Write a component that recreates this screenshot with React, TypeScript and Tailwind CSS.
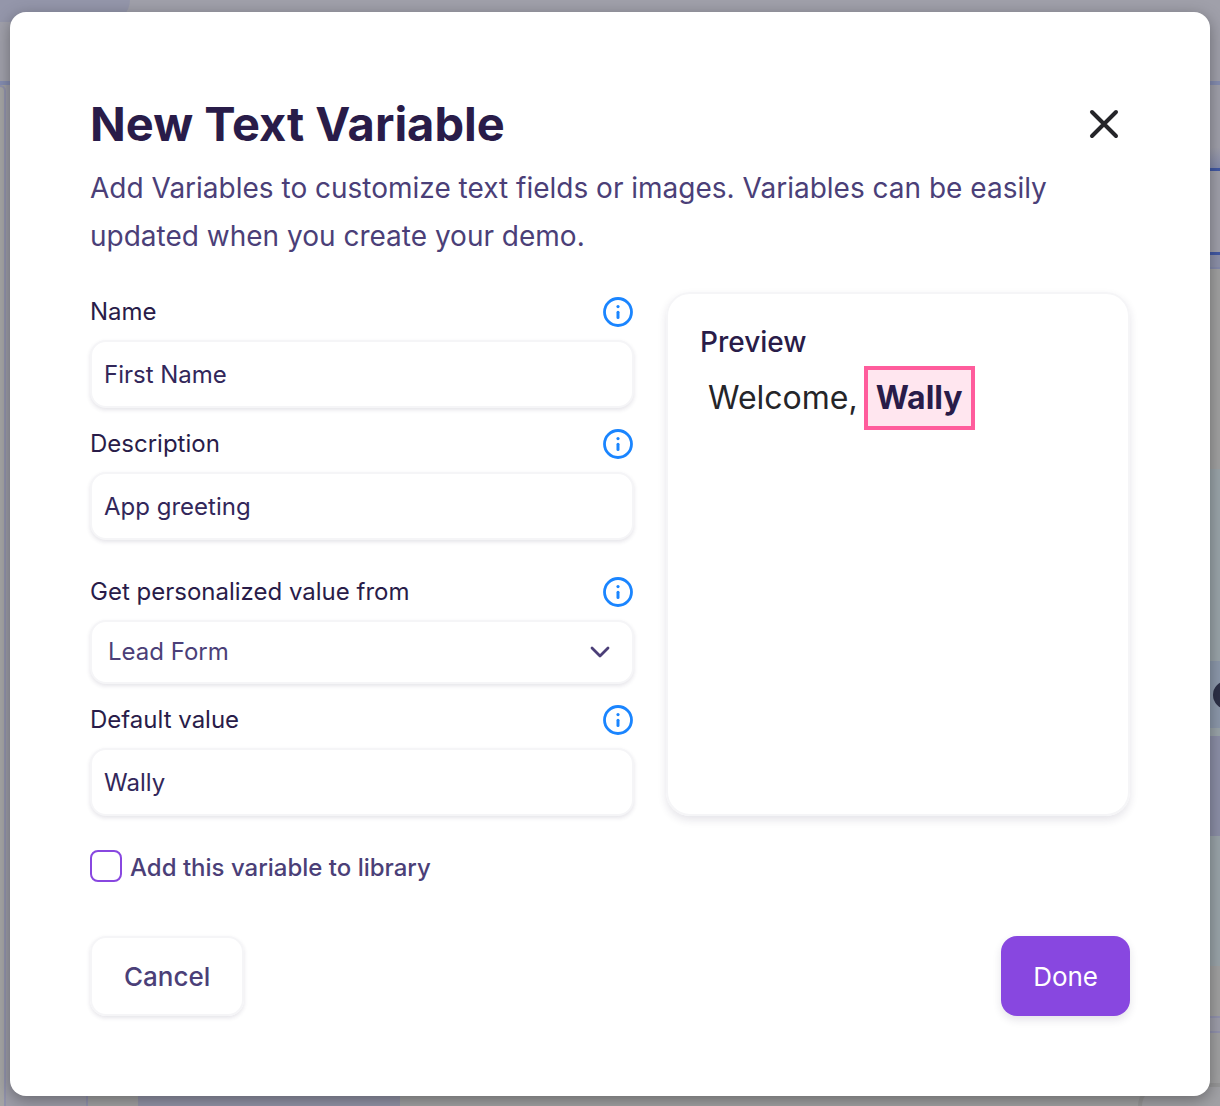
import { useId, useState } from "react";
import type { ReactNode } from "react";

const fieldClass =
  "w-full rounded-2xl border-2 border-[#f5f5f7] bg-white text-2xl shadow-[0_2px_4px_rgba(40,30,75,0.12)] outline-none focus:border-[#8847e0]";

function InfoIcon() {
  return (
    <svg viewBox="0 0 30 30" className="size-[30px]" fill="none" aria-hidden="true">
      <circle cx="15" cy="15" r="13.5" stroke="#1a85ff" strokeWidth="2.8" />
      <circle cx="15" cy="9.6" r="1.6" fill="#1a85ff" />
      <path d="M15 15.2v5.2" stroke="#1a85ff" strokeWidth="3" strokeLinecap="round" />
    </svg>
  );
}

function Field({ label, children }: { label: string; children: (id: string) => ReactNode }) {
  const id = useId();
  return (
    <div className="flex flex-col gap-2">
      <div className="flex h-10 items-center justify-between">
        <label htmlFor={id} className="text-2xl text-[#291c49]">
          {label}
        </label>
        <button type="button" aria-label={`About ${label}`} className="mr-px">
          <InfoIcon />
        </button>
      </div>
      {children(id)}
    </div>
  );
}

function TextField({ label, value, onChange }: { label: string; value: string; onChange: (v: string) => void }) {
  return (
    <Field label={label}>
      {(id) => (
        <input
          id={id}
          type="text"
          value={value}
          onChange={(e) => onChange(e.target.value)}
          className={`${fieldClass} h-[68px] px-3 text-[#32275a]`}
        />
      )}
    </Field>
  );
}

function Backdrop() {
  return (
    <div aria-hidden="true" className="absolute inset-0 flex flex-col overflow-hidden bg-[#a0a0aa]">
      <div className="h-[81px] shrink-0">
        <div className="h-[22px] w-[130px] rounded-br-3xl bg-[#9496aa]" />
      </div>
      <div className="h-1 shrink-0 bg-[#858db1]" />
      <div className="flex flex-1 bg-[#a1a1a2]">
        <div className="w-1.5 rounded-tr-xl border-t-2 border-r-2 border-[#9192ac] bg-[#a5a5a5]" />
        <div className="w-[82px] border-r-2 border-[#9192ac] bg-[#9d9da8]" />
        <div className="w-[50px]" />
        <div className="w-[262px] bg-[#9293a6]" />
        <div className="flex-1" />
        <div className="flex w-[82px] flex-col">
          <div className="h-[83px] bg-linear-to-b from-[#a0a0aa] from-75% to-[#858bab]" />
          <div className="h-[87px] border-y-3 border-[#4259a4] bg-[#a0a0aa]" />
          <div className="h-3.5 border-b-2 border-[#858bac] bg-[#8d91a9]" />
          <div className="h-[200px] bg-[#a1a1a1]" />
          <div className="h-48 bg-[#9aa4a9]" />
          <div className="flex h-[67px] items-center justify-end bg-[#8c98ab]">
            <div className="-mr-[21px] size-7 shrink-0 rounded-full bg-[#2d3047]" />
          </div>
          <div className="h-2 bg-[#9aa4a9]" />
          <div className="h-[100px] bg-[#8c8fa7]" />
          <div className="h-[130px] bg-[#9aa4a9]" />
          <div className="h-[50px] bg-[#a1a1a1]" />
          <div className="h-[17px] border-y-2 border-[#9293ae] bg-[#9e9eaa]" />
          <div className="h-[50px]" />
          <div className="flex-1 rounded-tl-3xl border-t-4 border-l-4 border-[#969697] bg-[#a1a1a5]" />
        </div>
      </div>
    </div>
  );
}

export default function App() {
  const [name, setName] = useState("First Name");
  const [description, setDescription] = useState("App greeting");
  const [source, setSource] = useState("Lead Form");
  const [fallback, setFallback] = useState("Wally");
  const [inLibrary, setInLibrary] = useState(false);

  return (
    <div className="relative min-h-screen px-2.5 pt-3 pb-2.5 font-['Inter',sans-serif]">
      <Backdrop />
      <main
        role="dialog"
        aria-labelledby="dialog-title"
        className="relative rounded-2xl bg-white p-20 shadow-[0_4px_16px_rgba(0,0,0,0.35)]"
      >
        <header>
          <div className="flex items-center justify-between">
            <h1 id="dialog-title" className="text-[47px] leading-16 font-bold text-[#291c49]">
              New Text Variable
            </h1>
            <button type="button" aria-label="Close" className="mr-2.5">
              <svg viewBox="0 0 32 32" className="size-8" fill="none" aria-hidden="true">
                <path d="M4 4l24 24M28 4L4 28" stroke="#252529" strokeWidth="4" strokeLinecap="round" />
              </svg>
            </button>
          </div>
          <p className="mt-2 text-[28px] leading-12 text-[#4b3f78]">
            Add Variables to customize text fields or images. Variables can be easily updated when you create your demo.
          </p>
        </header>

        <form onSubmit={(e) => e.preventDefault()}>
          <div className="mt-8 grid grid-cols-[544fr_464fr] gap-8">
            <div className="flex flex-col gap-8">
              <div className="flex flex-col gap-4">
                <TextField label="Name" value={name} onChange={setName} />
                <TextField label="Description" value={description} onChange={setDescription} />
              </div>
              <div className="flex flex-col gap-4">
                <Field label="Get personalized value from">
                  {(id) => (
                    <div className="relative">
                      <select
                        id={id}
                        value={source}
                        onChange={(e) => setSource(e.target.value)}
                        className={`${fieldClass} block h-16 appearance-none px-4 text-[#4b3f78]`}
                      >
                        <option>Lead Form</option>
                      </select>
                      <svg
                        viewBox="0 0 24 24"
                        className="pointer-events-none absolute inset-y-0 right-[22px] my-auto size-6"
                        fill="none"
                        aria-hidden="true"
                      >
                        <path d="M4 8l8 8 8-8" stroke="#4b3f78" strokeWidth="2.8" strokeLinecap="round" strokeLinejoin="round" />
                      </svg>
                    </div>
                  )}
                </Field>
                <TextField label="Default value" value={fallback} onChange={setFallback} />
              </div>
            </div>

            <section
              aria-labelledby="preview-title"
              className="rounded-3xl border-2 border-[#f5f5f7] px-8 py-7 shadow-[0_4px_8px_rgba(40,30,75,0.12)]"
            >
              <h2 id="preview-title" className="text-[28px] leading-10 font-medium text-[#291c49]">
                Preview
              </h2>
              <p className="mt-1 flex items-center gap-1.5 pl-2 text-[32px] text-[#252529]">
                <span>Welcome,</span>
                <strong className="border-4 border-[#ff5c9c] bg-[#ffe6ef] px-2 py-1 font-bold text-[#291c49]">
                  {fallback}
                </strong>
              </p>
            </section>
          </div>

          <label className="mt-8 flex h-9 w-fit items-center gap-2 text-2xl font-medium text-[#4b3f78]">
            <input
              type="checkbox"
              checked={inLibrary}
              onChange={(e) => setInLibrary(e.target.checked)}
              className="size-8 appearance-none rounded-lg border-2 border-[#8847e0] bg-white checked:bg-[#8847e0]"
            />
            <span className="pt-1">Add this variable to library</span>
          </label>

          <div className="mt-[52px] flex justify-between text-[26px]">
            <button
              type="button"
              className="h-20 rounded-2xl border-2 border-[#f5f5f7] px-8 font-medium text-[#4b3f78] shadow-[0_2px_4px_rgba(40,30,75,0.12)]"
            >
              Cancel
            </button>
            <button
              type="submit"
              className="h-20 rounded-2xl bg-[#8847e0] px-8 text-white shadow-[0_4px_8px_rgba(40,30,75,0.12)]"
            >
              Done
            </button>
          </div>
        </form>
      </main>
    </div>
  );
}
